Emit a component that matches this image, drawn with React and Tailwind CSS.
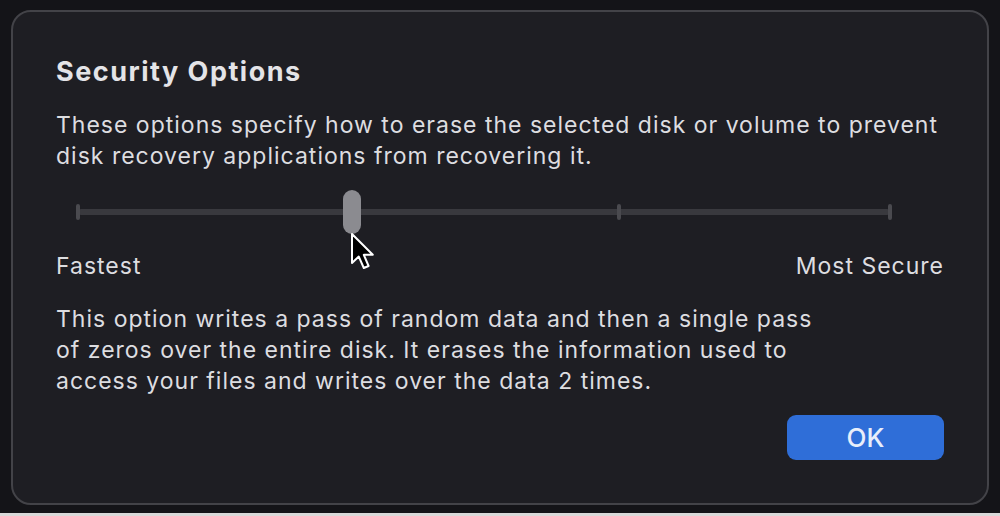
import React from 'react';

const font = { fontFamily: 'Inter, "Noto Sans", "Liberation Sans", sans-serif' };

function Cursor() {
  return (
    <svg width="26" height="38" viewBox="0 0 13 19" className="absolute left-[272px] top-[42px]">
      <path d="M1 1 L1 15.5 L4.4 12.3 L6.9 18 L9.3 17 L6.9 11.4 L11.4 11.4 Z"
        fill="#000" stroke="#fff" strokeWidth="1" strokeLinejoin="round" />
    </svg>
  );
}

function Slider() {
  const ticks = [0, 33.333, 66.667, 100];
  return (
    <div className="relative ml-[22px] mr-[54px] h-[44px]">
      <div className="absolute left-0 right-0 top-[19px] h-[6px] rounded-full bg-[#39393e]" />
      {ticks.map(t => (
        <div key={t} className="absolute top-[14px] h-[16px] w-[4px] -translate-x-1/2 rounded-full bg-[#4a4a4f]"
          style={{ left: `${t}%` }} />
      ))}
      <div className="absolute left-[265px] top-0 h-[44px] w-[18px] rounded-full bg-[#8b8b90]" />
      <Cursor />
    </div>
  );
}

export default function App() {
  return (
    <div className="h-[516px] w-[1000px] overflow-hidden bg-[#141418] flex flex-col" style={font}>
      <div className="flex-1 pt-[10px] pl-[11px] pr-[11px]">
        <div className="h-[495px] rounded-[20px] border-2 border-[#434348] bg-[#1e1e23] px-[43px] pt-[40px] text-[#dddde0]">
          <h1 className="text-[27px] font-bold leading-[40px] tracking-[1.5px] text-[#e4e4e7]">Security Options</h1>
          <div className="text-[23px] leading-[31px] tracking-[1px]">
            <p className="mt-[18px]">
              These options specify how to erase the selected disk or volume to prevent
              <br />disk recovery applications from recovering it.
            </p>
            <div className="mt-[18px]">
              <Slider />
            </div>
            <div className="mt-[17px] flex justify-between">
              <span>Fastest</span>
              <span>Most Secure</span>
            </div>
            <p className="mt-[22px]">
              This option writes a pass of random data and then a single pass
              <br />of zeros over the entire disk. It erases the information used to
              <br />access your files and writes over the data 2 times.
            </p>
          </div>
          <div className="mt-[18px] flex justify-end">
            <button className="h-[45px] w-[157px] rounded-[9px] bg-[#2f6ed8] text-[26px] font-medium text-[#e8eefb]">OK</button>
          </div>
        </div>
      </div>
      <div className="h-[3px] bg-[#d9d9d9]" />
    </div>
  );
}
